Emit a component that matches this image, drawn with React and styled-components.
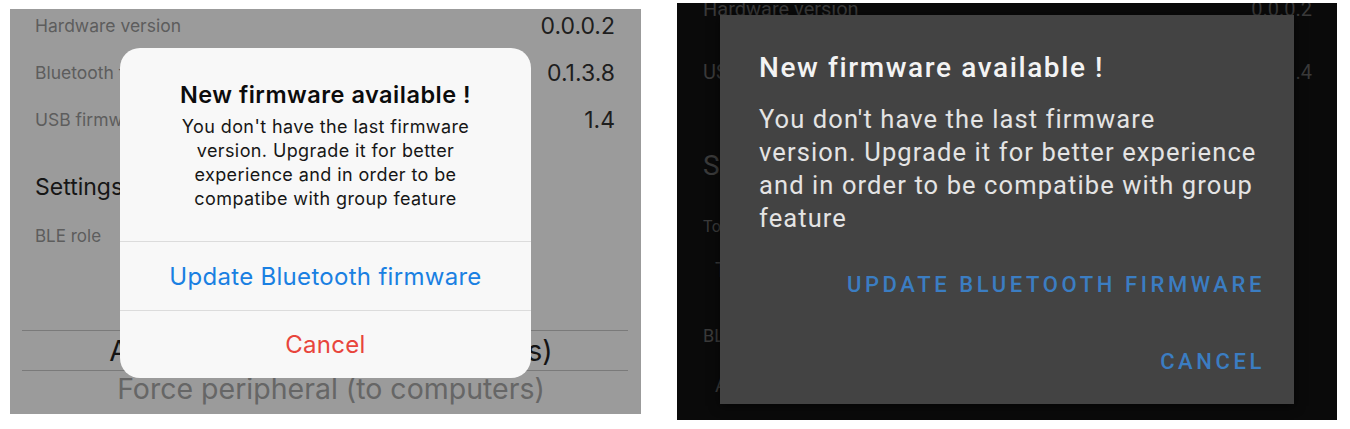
import styled, { createGlobalStyle } from 'styled-components'

const Global = createGlobalStyle`
	html, body {
		margin: 0;
		padding: 0;
		background: #ffffff;
	}
`

const Page = styled.div`
	width: 1350px;
	height: 429px;
	display: flex;
	align-items: flex-start;
	gap: 36px;
	padding-left: 10px;
	box-sizing: border-box;
	overflow: hidden;
`

// iOS side

const IosScreen = styled.div`
	position: relative;
	margin-top: 9px;
	width: 631px;
	height: 405px;
	background: #9b9b9b;
	overflow: hidden;
	font-family: Inter, "Liberation Sans", sans-serif;
	display: flex;
	flex-direction: column;
	padding: 0 26px 0 25px;
	box-sizing: border-box;
`

const InfoList = styled.div`
	margin-top: -7px;
	display: flex;
	flex-direction: column;
`

const InfoRow = styled.div`
	display: flex;
	justify-content: space-between;
	align-items: center;
	height: 47px;
`

const InfoLabel = styled.span`
	font-size: 17.5px;
	color: #5d5d5d;
`

const InfoValue = styled.span`
	font-size: 23px;
	color: #1e1e1e;
`

const SectionTitle = styled.div`
	margin-top: 30px;
	font-size: 23px;
	color: #161616;
`

const SubLabel = styled.div`
	margin-top: 25px;
	font-size: 17px;
	color: #5d5d5d;
`

const PickerRows = styled.div`
	margin: 84px -13px 0 -13px;
	display: flex;
	flex-direction: column;
`

const PickerItem = styled.div`
	flex: 0 0 ${p => (p.$selected ? '39px' : '34px')};
	display: flex;
	align-items: center;
	justify-content: center;
	padding-left: 12px;
	font-size: 28.5px;
	color: ${p => (p.$selected ? '#141414' : '#666666')};
	border-top: ${p => (p.$selected ? '1px solid #7a7a7a' : 'none')};
	border-bottom: ${p => (p.$selected ? '1px solid #7a7a7a' : 'none')};
	white-space: nowrap;
`

const IosAlert = styled.div`
	position: absolute;
	left: 110px;
	top: 39px;
	width: 411px;
	height: 330px;
	background: #f8f8f8;
	border-radius: 20px;
	display: flex;
	flex-direction: column;
	overflow: hidden;
`

const IosBody = styled.div`
	height: 194px;
	box-sizing: border-box;
	padding: 33px 20px 0;
	text-align: center;
	border-bottom: 1px solid #dcdcdc;
`

const IosTitle = styled.div`
	font-size: 23.5px;
	line-height: 28px;
	font-weight: 600;
	letter-spacing: 0.5px;
	color: #0c0c0c;
	margin-bottom: 6px;
`

const IosMessage = styled.div`
	font-size: 18px;
	line-height: 24px;
	letter-spacing: 0.4px;
	color: #161616;
	padding: 0 30px;
`

const IosButton = styled.div`
	flex: ${p => (p.$last ? 1 : '0 0 68px')};
	display: flex;
	align-items: center;
	justify-content: center;
	font-size: 24px;
	letter-spacing: 0.3px;
	color: ${p => (p.$destructive ? '#e8453c' : '#1a80e2')};
	border-bottom: ${p => (p.$last ? 'none' : '1px solid #dcdcdc')};
`

// Android side

const DroidScreen = styled.div`
	position: relative;
	margin-top: 3px;
	width: 660px;
	height: 417px;
	background: #0a0a0a;
	overflow: hidden;
	font-family: Roboto, "Noto Sans", sans-serif;
	color: #3a3a3a;
	padding: 0 25px 0 26px;
	box-sizing: border-box;
	display: flex;
	flex-direction: column;
`

const DimRow = styled.div`
	display: flex;
	justify-content: space-between;
	align-items: center;
	height: ${p => p.$h || 40}px;
	margin-top: ${p => p.$mt || 0}px;
	font-size: ${p => p.$size || 20}px;
	padding-left: ${p => p.$indent || 0}px;
	white-space: nowrap;
`

const DroidDialog = styled.div`
	position: absolute;
	left: 43px;
	top: 12px;
	width: 574px;
	height: 389px;
	background: #434343;
	box-shadow: 0 2px 10px rgba(0, 0, 0, 0.6);
	padding: 37px 33px 0 39px;
	box-sizing: border-box;
	display: flex;
	flex-direction: column;
`

const DroidTitle = styled.div`
	font-size: 28px;
	line-height: 32px;
	font-weight: 500;
	letter-spacing: 1.6px;
	color: #f3f3f3;
`

const DroidMessage = styled.div`
	margin-top: 19px;
	font-size: 25.5px;
	line-height: 33px;
	letter-spacing: 1.1px;
	color: #e4e4e4;
	white-space: nowrap;
`

const MessageLine = styled.div``

const DroidActions = styled.div`
	margin-top: 38px;
	display: flex;
	flex-direction: column;
	align-items: flex-end;
	gap: 53px;
`

const DroidButton = styled.div`
	font-size: 22px;
	line-height: 24px;
	font-weight: 500;
	letter-spacing: 3.6px;
	margin-right: -4px;
	color: #3b7dc2;
	text-transform: uppercase;
`

const iosMessage =
	"You don't have the last firmware version. Upgrade it for better experience and in order to be compatibe with group feature"

const droidLines = [
	"You don't have the last firmware",
	'version. Upgrade it for better experience',
	'and in order to be compatibe with group',
	'feature',
]

export default function App() {
	return (
		<>
			<Global />
			<Page>
				<IosScreen>
					<InfoList>
						<InfoRow>
							<InfoLabel>Hardware version</InfoLabel>
							<InfoValue>0.0.0.2</InfoValue>
						</InfoRow>
						<InfoRow>
							<InfoLabel>Bluetooth firmware version</InfoLabel>
							<InfoValue>0.1.3.8</InfoValue>
						</InfoRow>
						<InfoRow>
							<InfoLabel>USB firmware version</InfoLabel>
							<InfoValue>1.4</InfoValue>
						</InfoRow>
					</InfoList>
					<SectionTitle>Settings</SectionTitle>
					<SubLabel>BLE role</SubLabel>
					<PickerRows>
						<PickerItem $selected>Automatic (central &amp; peripherals)</PickerItem>
						<PickerItem>Force peripheral (to computers)</PickerItem>
					</PickerRows>

					<IosAlert>
						<IosBody>
							<IosTitle>New firmware available !</IosTitle>
							<IosMessage>{iosMessage}</IosMessage>
						</IosBody>
						<IosButton>Update Bluetooth firmware</IosButton>
						<IosButton $destructive $last>Cancel</IosButton>
					</IosAlert>
				</IosScreen>

				<DroidScreen>
					<DimRow $h={20} $mt={-4}>
						<span>Hardware version</span>
						<span>0.0.0.2</span>
					</DimRow>
					<DimRow $h={60} $mt={23}>
						<span>USB firmware version</span>
						<span>1.4</span>
					</DimRow>
					<DimRow $mt={43} $size={28}>
						<span>Settings</span>
					</DimRow>
					<DimRow $mt={21} $size={16}>
						<span>Toggle</span>
					</DimRow>
					<DimRow $mt={4} $indent={12}>
						<span>Toggle</span>
					</DimRow>
					<DimRow $mt={25} $size={18}>
						<span>BLE role</span>
					</DimRow>
					<DimRow $mt={10} $indent={12}>
						<span>Auto</span>
					</DimRow>

					<DroidDialog>
						<DroidTitle>New firmware available !</DroidTitle>
						<DroidMessage>
							{droidLines.map(line => (
								<MessageLine key={line}>{line}</MessageLine>
							))}
						</DroidMessage>
						<DroidActions>
							<DroidButton>Update Bluetooth firmware</DroidButton>
							<DroidButton>Cancel</DroidButton>
						</DroidActions>
					</DroidDialog>
				</DroidScreen>
			</Page>
		</>
	)
}
